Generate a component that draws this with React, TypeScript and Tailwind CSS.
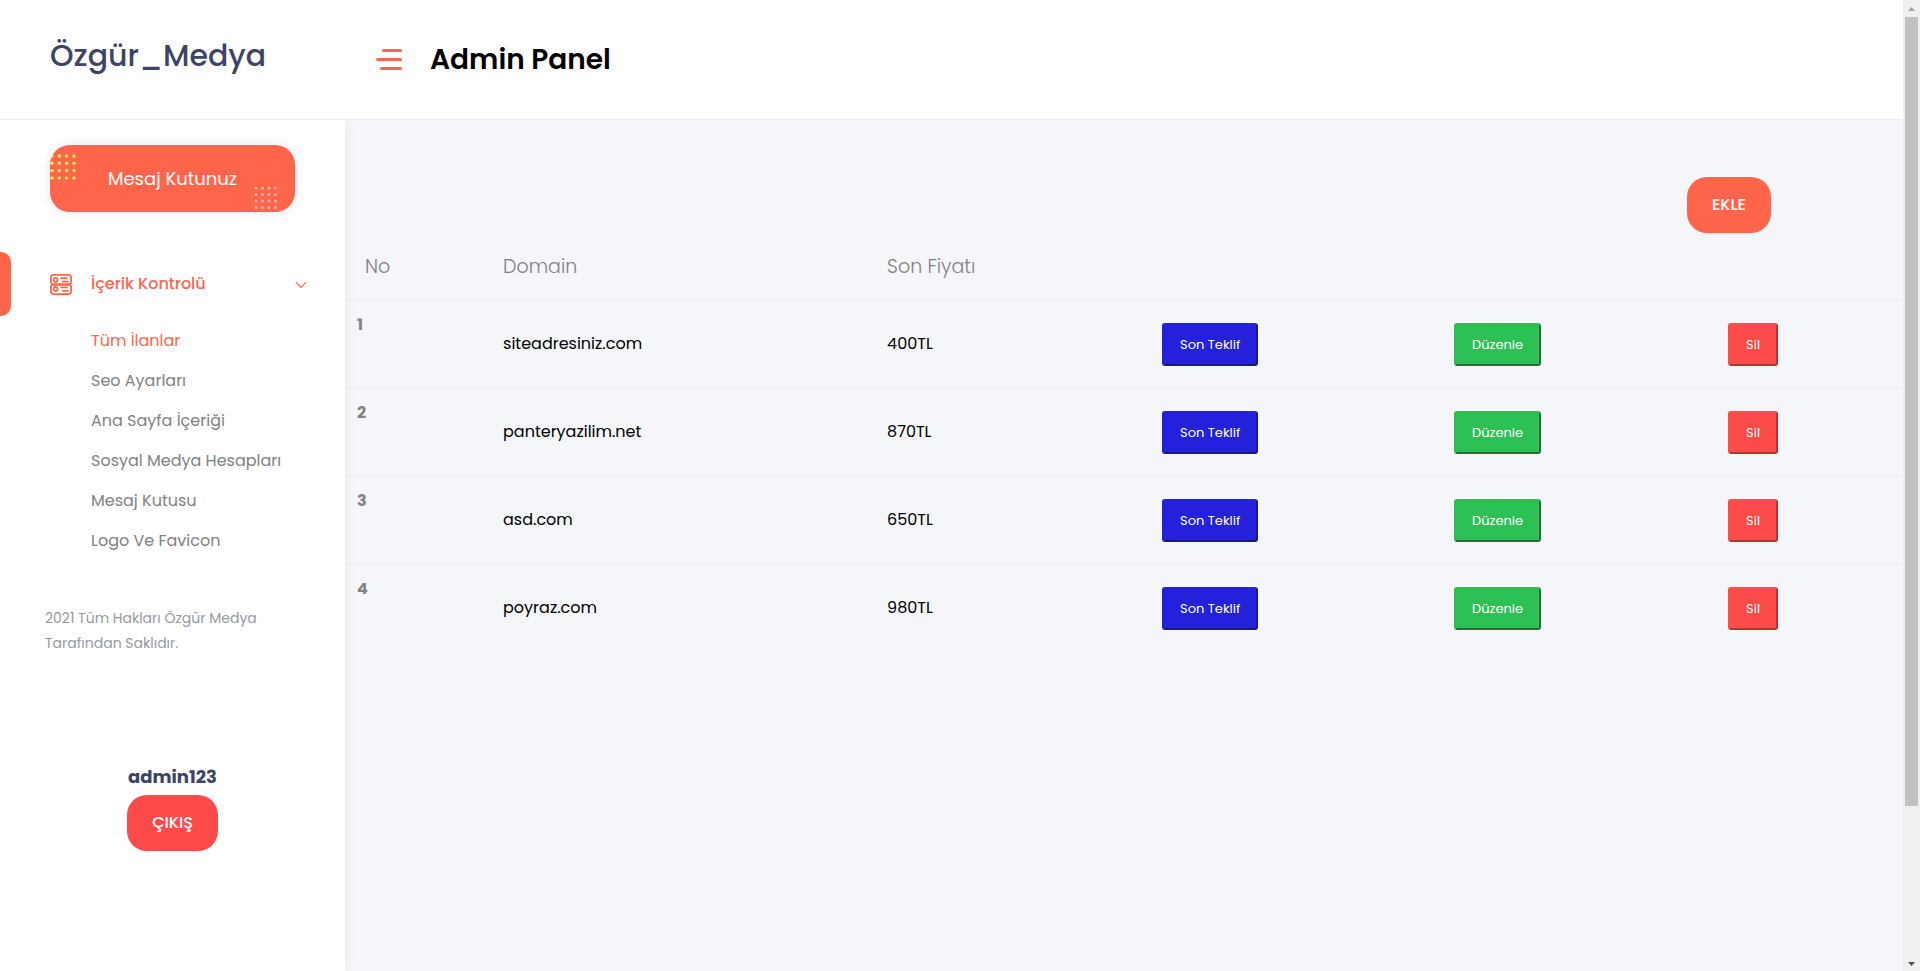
import { useState } from 'react';

interface Listing {
  id: number;
  domain: string;
  price: string;
}

const listings: Listing[] = [
  { id: 1, domain: 'siteadresiniz.com', price: '400TL' },
  { id: 2, domain: 'panteryazilim.net', price: '870TL' },
  { id: 3, domain: 'asd.com', price: '650TL' },
  { id: 4, domain: 'poyraz.com', price: '980TL' },
];

const menuItems = [
  'Tüm İlanlar',
  'Seo Ayarları',
  'Ana Sayfa İçeriği',
  'Sosyal Medya Hesapları',
  'Mesaj Kutusu',
  'Logo Ve Favicon',
];

const steps = [0, 1, 2, 3];

function DotGrid({ gap, radius, className }: { gap: number; radius: number; className: string }) {
  return (
    <svg className={className} aria-hidden="true">
      {steps.map((row) =>
        steps.map((col) => (
          <circle key={`${row}-${col}`} cx={2 + col * gap} cy={2 + row * gap} r={radius} />
        ))
      )}
    </svg>
  );
}

function ServerIcon() {
  return (
    <svg width="22" height="21" viewBox="0 0 22 21" fill="none" stroke="currentColor" strokeWidth="1.8" strokeLinecap="round" aria-hidden="true">
      <rect x="0.9" y="0.9" width="20.2" height="9.6" rx="2.8" />
      <rect x="0.9" y="10.5" width="20.2" height="9.6" rx="2.8" />
      <circle cx="5.6" cy="5.9" r="2" />
      <circle cx="5.6" cy="15" r="2" />
      <path d="M11 4.1h6M12.6 7.6h5.400M11 13.3h6M12.6 16.8h5.400" />
    </svg>
  );
}

function Header() {
  return (
    <header className="relative z-20 flex h-[120px] border-b border-[#eeeeee] bg-white">
      <a href="#" className="flex w-[345px] shrink-0 items-center pb-2 pl-[50px] text-3xl font-medium text-[#3d4465]">
        Özgür_Medya
      </a>
      <div className="flex items-center gap-7 pl-[31px]">
        <button type="button" aria-label="Menü" className="flex w-[26px] flex-col items-end gap-1.5">
          <span className="h-[3px] w-[20px] rounded-full bg-[#ff654b]" />
          <span className="h-[3px] w-[26px] rounded-full bg-[#ff654b]" />
          <span className="h-[3px] w-[22px] rounded-full bg-[#ff654b]" />
        </button>
        <h1 className="text-[28px] font-semibold text-black">Admin Panel</h1>
      </div>
    </header>
  );
}

function Sidebar() {
  const [open, setOpen] = useState(true);
  const [active, setActive] = useState('Tüm İlanlar');

  return (
    <aside className="z-10 w-[345px] shrink-0 bg-white pt-[25px] shadow-[0_0_12px_rgba(0,0,0,0.06)]">
      <div className="px-[50px]">
        <a
          href="#"
          className="relative flex h-[67px] items-center justify-center overflow-hidden rounded-[20px] bg-[#ff654b] text-lg text-white shadow-[0_0_12px_rgba(0,0,0,0.1)]"
        >
          <DotGrid gap={7.3} radius={1.7} className="absolute top-[9px] left-0 h-7 w-7 fill-[#ffe94c]" />
          Mesaj Kutunuz
          <DotGrid gap={6.5} radius={1.5} className="absolute right-[17px] bottom-0.5 h-6 w-6 fill-white/50" />
        </a>
      </div>

      <nav className="mt-10">
        <div className="flex h-16 items-center">
          <span className="h-16 w-[11px] rounded-r-[10px] bg-[#ff654b]" />
          <button
            type="button"
            aria-expanded={open}
            onClick={() => setOpen(!open)}
            className="flex flex-1 items-center pr-[38px] pl-[39px] text-base font-medium text-[#ff654b]"
          >
            <ServerIcon />
            <span className="ml-[19px] flex-1 text-left">İçerik Kontrolü</span>
            <svg className="mt-0.5" width="12" height="8" viewBox="0 0 12 8" fill="none" stroke="currentColor" strokeWidth="1.2" aria-hidden="true">
              <path d="M0.8 1.2L6 6.4l5.200-5.200" />
            </svg>
          </button>
        </div>
        {open && (
          <ul className="mt-[5px] pl-[91px]">
            {menuItems.map((item) => (
              <li key={item}>
                <a
                  href="#"
                  onClick={() => setActive(item)}
                  className={`flex h-10 items-center text-base ${item === active ? 'text-[#ff654b]' : 'text-[#828282]'}`}
                >
                  {item}
                </a>
              </li>
            ))}
          </ul>
        )}
      </nav>

      <p className="mt-[45px] px-[45px] text-sm leading-[25px] text-[#96999f]">
        2021 Tüm Hakları Özgür Medya
        <br />
        Tarafından Saklıdır.
      </p>

      <div className="mt-[105px] flex flex-col items-center pb-30">
        <strong className="text-lg leading-[31px] font-bold text-[#3d4465]">admin123</strong>
        <button type="button" className="mt-[3px] h-14 rounded-[20px] bg-[#ff4a4a] px-[25px] text-base font-medium text-white">
          ÇIKIŞ
        </button>
      </div>
    </aside>
  );
}

function ListingTable() {
  const actionClass = 'h-[43px] rounded-[3px] border-2 px-4 pt-px text-[13px] text-white';

  return (
    <table className="w-full table-fixed text-left">
      <colgroup>
        <col className="w-[8.86%]" />
        <col className="w-[24.65%]" />
        <col className="w-[17.65%]" />
        <col className="w-[18.74%]" />
        <col className="w-[17.59%]" />
        <col className="w-[12.51%]" />
      </colgroup>
      <thead>
        <tr className="h-[67px] border-b border-[#eeeeee] text-[19px] text-[#828282]">
          <th className="px-5 pt-0.5 font-light">No</th>
          <th className="px-5 pt-0.5 font-light">Domain</th>
          <th className="px-5 pt-0.5 font-light">Son Fiyatı</th>
          <td />
          <td />
          <td />
        </tr>
      </thead>
      <tbody>
        {listings.map((listing) => (
          <tr key={listing.id} className="h-22 border-b border-[#eeeeee] text-base text-black last:border-b-0">
            <th scope="row" className="px-3 pt-3 align-top font-bold text-[#828282]">{listing.id}</th>
            <td className="px-5">{listing.domain}</td>
            <td className="px-5">{listing.price}</td>
            <td className="px-5">
              <button type="button" className={`${actionClass} border-t-[#2420dc] border-r-[#191693] border-b-[#191693] border-l-[#2420dc] bg-[#2420dc]`}>Son Teklif</button>
            </td>
            <td className="px-5">
              <button type="button" className={`${actionClass} border-t-[#2cc155] border-r-[#1d7137] border-b-[#1d7137] border-l-[#2cc155] bg-[#2cc155]`}>Düzenle</button>
            </td>
            <td className="px-5">
              <button type="button" className={`${actionClass} border-t-[#ff4a4a] border-r-[#b83232] border-b-[#b83232] border-l-[#ff4a4a] bg-[#ff4a4a]`}>Sil</button>
            </td>
          </tr>
        ))}
      </tbody>
    </table>
  );
}

function ScrollRail() {
  return (
    <div className="flex w-[17px] shrink-0 flex-col items-center bg-[#f0f0f0]" aria-hidden="true">
      <svg className="h-[17px] w-[17px] shrink-0 fill-[#a3a3a3]" viewBox="0 0 17 17">
        <path d="M5 11h7L8.5 7z" />
      </svg>
      <div className="h-[789px] w-[13px] bg-[#c1c1c1]" />
      <svg className="mt-auto h-[17px] w-[17px] shrink-0 fill-[#505050]" viewBox="0 0 17 17">
        <path d="M5 8h7l-3.500 4z" />
      </svg>
    </div>
  );
}

export default function App() {
  return (
    <div className="flex min-h-screen bg-[#f4f6fa] font-['Poppins','Inter',sans-serif]">
      <div className="flex min-w-0 flex-1 flex-col">
        <Header />
        <div className="flex flex-1">
          <Sidebar />
          <main className="min-w-0 flex-1 pt-[57px]">
            <div className="flex justify-end pr-[132px]">
              <button type="button" className="h-14 rounded-[20px] bg-[#ff654b] px-[25px] text-base font-medium text-white">
                EKLE
              </button>
            </div>
            <ListingTable />
          </main>
        </div>
      </div>
      <ScrollRail />
    </div>
  );
}
